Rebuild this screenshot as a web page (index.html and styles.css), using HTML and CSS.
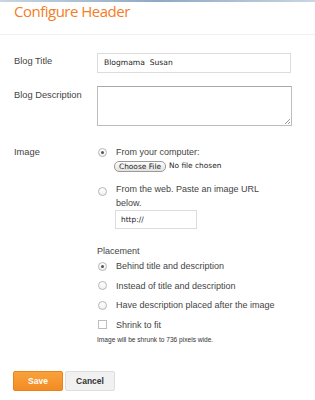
FILE: index.html
```html
<!DOCTYPE html>
<html lang="en">
<head>
    <meta charset="UTF-8">
    <meta name="viewport" content="width=device-width, initial-scale=1.0">
    <title>Configure Header</title>
    <link rel="stylesheet" href="styles.css">
</head>
<body>
    <div class="topbar"></div>
    <div class="header">
        <h1>Configure Header</h1>
    </div>

    <div class="form">
        <!-- Title -->
        <div class="row">
            <label class="label">Blog Title</label>
            <div class="field">
                <div class="input title-input">Blogmama&nbsp; Susan</div>
            </div>
        </div>

        <!-- Description -->
        <div class="row row-desc">
            <label class="label">Blog Description</label>
            <div class="field">
                <div class="textarea"><span class="grip"></span></div>
            </div>
        </div>

        <!-- Image -->
        <div class="row row-image">
            <label class="label">Image</label>
            <div class="field">
                <div class="option">
                    <span class="radio checked"></span>
                    <div class="option-body">
                        <div>From your computer:</div>
                        <div class="file"><span class="file-btn">Choose File</span> No file chosen</div>
                    </div>
                </div>
                <div class="option option-web">
                    <span class="radio"></span>
                    <div class="option-body">
                        <div class="wrap">From the web. Paste an image URL below.</div>
                        <div class="input url-input">http://</div>
                    </div>
                </div>

                <div class="placement">
                    <div class="sub-label">Placement</div>
                    <div class="choices">
                        <div class="choice"><span class="radio checked"></span>Behind title and description</div>
                        <div class="choice"><span class="radio"></span>Instead of title and description</div>
                        <div class="choice"><span class="radio"></span>Have description placed after the image</div>
                        <div class="choice"><span class="check"></span>Shrink to fit</div>
                    </div>
                    <div class="note">Image will be shrunk to 736 pixels wide.</div>
                </div>
            </div>
        </div>

        <div class="actions">
            <button class="btn btn-save">Save</button>
            <button class="btn btn-cancel">Cancel</button>
        </div>
    </div>
</body>
</html>
```

FILE: styles.css
```css
body {
    margin: 0;
    font-family: "Liberation Sans", Arial, sans-serif;
    font-size: 9px;
    color: #444;
    background: #fff;
}
.topbar {
    height: 2px;
    background: linear-gradient(to right, #c9d6e3, #8fa8c4 50%, #c9d6e3);
}
.header {
    height: 34px;
    padding: 0 14px;
    border-bottom: 1px solid #f0f0f0;
}
.header h1 {
    margin: 0;
    margin-top: -2px;
    font-family: "Open Sans", sans-serif;
    font-weight: normal;
    font-size: 15px;
    letter-spacing: -0.5px;
    line-height: 22px;
    color: #f57d1f;
}
.form {
    padding: 18px 14px 0 14px;
}
.row {
    display: grid;
    grid-template-columns: 83px 194px;
}
.label {
    font-size: 9.3px;
    line-height: 13px;
    padding-top: 2px;
    color: #444;
}
.row-desc {
    margin-top: 13px;
}
.row-desc .label {
    padding-top: 3px;
}
.input {
    box-sizing: border-box;
    border: 1px solid #dcdcdc;
    background: #fff;
    font-family: "DejaVu Sans", sans-serif;
    color: #222;
}
.title-input {
    height: 20px;
    line-height: 18px;
    padding-left: 6px;
    font-size: 7.6px;
}
.textarea {
    position: relative;
    box-sizing: border-box;
    height: 40px;
    width: 195px;
    border: 1px solid #bdbdbd;
    border-top-color: #a8a8a8;
}
.grip {
    position: absolute;
    right: 1px;
    bottom: 1px;
    width: 5px;
    height: 5px;
    background: linear-gradient(135deg, transparent 45%, #999 46%, #999 54%, transparent 55%, transparent 75%, #999 76%, #999 84%, transparent 85%);
}
.row-image {
    margin-top: 19px;
}
.row-image .label {
    padding-top: 1px;
}
.field {
    min-width: 0;
}
.option {
    display: flex;
    line-height: 14px;
}
.option .radio {
    margin: 3px 9px 0 1px;
}
.option-body {
    flex: 1;
}
.file {
    display: flex;
    align-items: center;
    gap: 3px;
    font-family: "DejaVu Sans", sans-serif;
    font-size: 7.4px;
    color: #222;
    margin-left: -2px;
}
.file-btn {
    display: inline-block;
    height: 11px;
    line-height: 10px;
    box-sizing: border-box;
    padding: 0 4px;
    border: 1px solid #9a9a9a;
    border-radius: 5px;
    background: linear-gradient(#fdfdfd, #e2e2e2);
}
.option-web {
    margin-top: 9px;
}
.option-web .radio {
    margin-top: 5px;
}
.wrap {
    width: 160px;
}
.url-input {
    width: 82px;
    height: 19px;
    line-height: 17px;
    padding-left: 5px;
    font-size: 7.4px;
    margin-left: -1px;
}
.radio {
    flex: none;
    display: inline-block;
    box-sizing: border-box;
    width: 9px;
    height: 9px;
    border: 1px solid #b5b5b5;
    border-radius: 50%;
    background: linear-gradient(#fff, #f1f1f1);
    position: relative;
}
.radio.checked::after {
    content: "";
    position: absolute;
    left: 2px;
    top: 2px;
    width: 3px;
    height: 3px;
    border-radius: 50%;
    background: #555;
}
.check {
    flex: none;
    display: inline-block;
    box-sizing: border-box;
    width: 9px;
    height: 9px;
    border: 1px solid #bdbdbd;
    background: #fff;
}
.placement {
    margin-top: 16px;
}
.sub-label {
    line-height: 13px;
}
.choices {
    display: flex;
    flex-direction: column;
    gap: 5.5px;
    margin-top: 1px;
}
.choice {
    display: flex;
    align-items: center;
    line-height: 14px;
}
.choice .radio,
.choice .check {
    margin: 0 9px 0 1px;
}
.note {
    margin-top: 4px;
    font-size: 6.6px;
    color: #333;
}
.actions {
    display: flex;
    gap: 2px;
    margin-top: 28px;
    margin-left: -1px;
}
.btn {
    width: 50px;
    height: 20px;
    font-family: "Liberation Sans", Arial, sans-serif;
    font-size: 8.5px;
    font-weight: bold;
    border-radius: 2px;
    padding: 0;
}
.btn-save {
    color: #fff;
    background: linear-gradient(#f8a23c, #f48b24);
    border: 1px solid #e8821c;
}
.btn-cancel {
    color: #333;
    background: #f1f1f1;
    border: 1px solid #dedede;
}
```
